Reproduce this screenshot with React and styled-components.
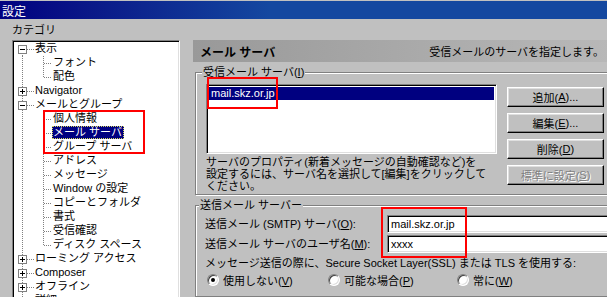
import React from "react";
import styled, { createGlobalStyle } from "styled-components";

const GlobalStyle = createGlobalStyle`
  html, body {
    margin: 0;
    padding: 0;
    background: #c0c0c0;
  }
  body {
    font-family: "Liberation Sans", "Noto Sans CJK JP", sans-serif;
    font-size: 11px;
    color: #000;
  }
`;

const Window = styled.div`
  position: relative;
  width: 607px;
  height: 297px;
  overflow: hidden;
  display: flex;
  flex-direction: column;
  background: #c0c0c0;
`;

const TitleBar = styled.div`
  margin-top: 1px;
  height: 18px;
  flex-shrink: 0;
  display: flex;
  align-items: center;
  padding-left: 2px;
  color: #fff;
  font-size: 12px;
  background: linear-gradient(to right, #000080 0px, #0a1888 90px, #1448a0 270px, #1448a0 100%);
`;

const Body = styled.div`
  display: flex;
  padding-left: 12px;
  flex: 1;
  min-height: 0;
`;

const LeftColumn = styled.div`
  width: 168px;
  flex-shrink: 0;
  display: flex;
  flex-direction: column;
`;

const CategoryLabel = styled.div`
  margin-top: 4px;
  height: 14px;
  line-height: 14px;
`;

const TreeBox = styled.div`
  margin-top: 3px;
  height: 270px;
  flex-shrink: 0;
  padding: 1px;
  background: #fff;
  border: 1px solid;
  border-color: #808080 #fff #fff #808080;
  box-shadow: inset 1px 1px 0 #000, inset -1px -1px 0 #dfdfdf;
`;

const TreeRow = styled.div`
  display: flex;
  height: 14px;
  align-items: flex-start;
  white-space: nowrap;
`;

const TreeLabel = styled.span`
  height: 13px;
  line-height: 13px;
  padding: 0 2px 0 1px;
  background: ${(p) => (p.$selected ? "#000080" : "transparent")};
  color: ${(p) => (p.$selected ? "#fff" : "#000")};
  outline: ${(p) => (p.$selected ? "1px dotted #d8d860" : "none")};
  outline-offset: -1px;
`;

const RightColumn = styled.div`
  margin-left: 13px;
  margin-top: 21px;
  width: 430px;
  flex-shrink: 0;
  display: flex;
  flex-direction: column;
`;

const PanelHeader = styled.div`
  height: 22px;
  display: flex;
  align-items: center;
  justify-content: space-between;
  padding: 0 19px 0 7px;
  background: linear-gradient(to right, #999999 0%, #a9a9a9 50%, #b9b9b9 100%);
`;

const HeaderTitle = styled.span`
  font-size: 12px;
  font-weight: bold;
`;

const HeaderHint = styled.span`
  font-size: 11px;
`;

const GroupBox = styled.div`
  margin-top: 10px;
  margin-left: 2px;
  display: flex;
  flex-direction: column;
  border: 1px solid #808080;
  box-shadow: inset 1px 1px 0 #fff, 1px 1px 0 #fff;
  padding-bottom: ${(p) => p.$padBottom}px;
`;

const GroupLabel = styled.div`
  align-self: flex-start;
  margin: -7px 0 0 ${(p) => p.$indent}px;
  padding: 0 1px;
  height: 13px;
  line-height: 13px;
  background: #c0c0c0;
`;

const IncomingRow = styled.div`
  display: flex;
  margin-top: 5px;
  padding-left: 10px;
`;

const ListStack = styled.div`
  display: flex;
  flex-direction: column;
`;

const ServerList = styled.div`
  width: 291px;
  height: 70px;
  box-sizing: border-box;
  padding: 2px;
  background: #fff;
  border: 1px solid;
  border-color: #808080 #fff #fff #808080;
  box-shadow: inset 1px 1px 0 #000, inset -1px -1px 0 #dfdfdf;
`;

const ServerItem = styled.div`
  height: 13px;
  line-height: 13px;
  padding-left: 2px;
  background: #000080;
  color: #fff;
`;

const HelpText = styled.div`
  margin-top: 2px;
  line-height: 12px;
  white-space: nowrap;
`;

const ButtonStack = styled.div`
  margin-left: 10px;
  margin-top: 3px;
  display: flex;
  flex-direction: column;
  gap: 6px;
`;

const Button = styled.div`
  width: 97px;
  height: 20px;
  box-sizing: border-box;
  display: flex;
  align-items: center;
  justify-content: center;
  background: #c0c0c0;
  border: 1px solid;
  border-color: #fff #000 #000 #fff;
  box-shadow: inset -1px -1px 0 #808080, inset 1px 1px 0 #dfdfdf;
  color: ${(p) => (p.$disabled ? "#808080" : "#000")};
  text-shadow: ${(p) => (p.$disabled ? "1px 1px 0 #fff" : "none")};
`;

const FormGrid = styled.div`
  margin-top: 3px;
  padding-left: 9px;
  display: grid;
  grid-template-columns: 182px 1fr;
  row-gap: 2px;
  align-items: center;
`;

const FieldLabel = styled.div`
  line-height: 18px;
  white-space: nowrap;
`;

const TextField = styled.div`
  height: 18px;
  box-sizing: border-box;
  padding-left: 3px;
  line-height: 16px;
  background: #fff;
  border: 1px solid;
  border-color: #808080 #fff #fff #808080;
  box-shadow: inset 1px 1px 0 #000, inset -1px -1px 0 #dfdfdf;
`;

const SslNote = styled.div`
  margin-top: 3px;
  padding-left: 9px;
  line-height: 14px;
  white-space: nowrap;
`;

const RadioRow = styled.div`
  margin-top: 3px;
  padding-left: 11px;
  display: flex;
  height: 14px;
  align-items: center;
`;

const RadioOption = styled.div`
  width: ${(p) => p.$width}px;
  display: flex;
  align-items: center;
  gap: 4px;
  white-space: nowrap;
`;

const RadioCircle = styled.span`
  width: 12px;
  height: 12px;
  box-sizing: border-box;
  border-radius: 50%;
  border: 1px solid;
  border-color: #808080 #fff #fff #808080;
  box-shadow: inset 1px 1px 0 #404040, inset -1px -1px 0 #dfdfdf;
  background: #fff;
  display: flex;
  align-items: center;
  justify-content: center;
  flex-shrink: 0;
`;

const RadioDot = styled.span`
  width: 4px;
  height: 4px;
  border-radius: 50%;
  background: #000;
`;

const Marker = styled.div`
  position: absolute;
  left: ${(p) => p.$x}px;
  top: ${(p) => p.$y}px;
  width: ${(p) => p.$w}px;
  height: ${(p) => p.$h}px;
  box-sizing: border-box;
  border: 2px solid #ff0000;
  pointer-events: none;
`;

const treeRows = [
  { level: 0, label: "表示", toggle: "minus", first: true },
  { level: 1, label: "フォント" },
  { level: 1, label: "配色", last: true },
  { level: 0, label: "Navigator", toggle: "plus" },
  { level: 0, label: "メールとグループ", toggle: "minus" },
  { level: 1, label: "個人情報" },
  { level: 1, label: "メール サーバ", selected: true },
  { level: 1, label: "グループ サーバ" },
  { level: 1, label: "アドレス" },
  { level: 1, label: "メッセージ" },
  { level: 1, label: "Window の設定" },
  { level: 1, label: "コピーとフォルダ" },
  { level: 1, label: "書式" },
  { level: 1, label: "受信確認" },
  { level: 1, label: "ディスク スペース", last: true },
  { level: 0, label: "ローミング アクセス", toggle: "plus" },
  { level: 0, label: "Composer", toggle: "plus" },
  { level: 0, label: "オフライン", toggle: "plus" },
  { level: 0, label: "詳細", toggle: "plus" },
];

const dot = { stroke: "#808080", strokeWidth: 1, strokeDasharray: "1 1", shapeRendering: "crispEdges" };

function RootGutter({ toggle, first }) {
  return (
    <svg width="20" height="14" style={{ flexShrink: 0 }}>
      <line x1="8.5" y1={first ? 7 : 0} x2="8.5" y2="14" {...dot} />
      {toggle && (
        <>
          <line x1="13" y1="7.5" x2="20" y2="7.5" {...dot} />
          <rect x="4.5" y="3.5" width="8" height="8" fill="#fff" stroke="#808080" shapeRendering="crispEdges" />
          <line x1="6" y1="7.5" x2="11" y2="7.5" stroke="#000" shapeRendering="crispEdges" />
          {toggle === "plus" && <line x1="8.5" y1="5" x2="8.5" y2="10" stroke="#000" shapeRendering="crispEdges" />}
        </>
      )}
    </svg>
  );
}

function ChildGutter({ last }) {
  return (
    <svg width="18" height="14" style={{ flexShrink: 0 }}>
      <line x1="9.5" y1="0" x2="9.5" y2={last ? 8 : 14} {...dot} />
      <line x1="10" y1="7.5" x2="18" y2="7.5" {...dot} />
    </svg>
  );
}

function CategoryTree() {
  return (
    <TreeBox>
      {treeRows.map((row) => (
        <TreeRow key={row.label}>
          <RootGutter toggle={row.level === 0 ? row.toggle : null} first={row.first} />
          {row.level === 1 && <ChildGutter last={row.last} />}
          <TreeLabel $selected={row.selected}>{row.label}</TreeLabel>
        </TreeRow>
      ))}
    </TreeBox>
  );
}

function Radio({ checked, width, children }) {
  return (
    <RadioOption $width={width}>
      <RadioCircle>{checked && <RadioDot />}</RadioCircle>
      <span>{children}</span>
    </RadioOption>
  );
}

export default function App() {
  return (
    <>
      <GlobalStyle />
      <Window>
        <TitleBar>設定</TitleBar>
        <Body>
          <LeftColumn>
            <CategoryLabel>カテゴリ</CategoryLabel>
            <CategoryTree />
          </LeftColumn>
          <RightColumn>
            <PanelHeader>
              <HeaderTitle>メール サーバ</HeaderTitle>
              <HeaderHint>受信メールのサーバを指定します。</HeaderHint>
            </PanelHeader>

            <GroupBox $padBottom={2}>
              <GroupLabel $indent={6}>
                受信メール サーバ(<u>I</u>)
              </GroupLabel>
              <IncomingRow>
                <ListStack>
                  <ServerList>
                    <ServerItem>mail.skz.or.jp</ServerItem>
                  </ServerList>
                  <HelpText>
                    サーバのプロパティ(新着メッセージの自動確認など)を
                    <br />
                    設定するには、サーバ名を選択して[編集]をクリックして
                    <br />
                    ください。
                  </HelpText>
                </ListStack>
                <ButtonStack>
                  <Button>追加(<u>A</u>)...</Button>
                  <Button>編集(<u>E</u>)...</Button>
                  <Button>削除(<u>D</u>)</Button>
                  <Button $disabled>標準に設定(<u>S</u>)</Button>
                </ButtonStack>
              </IncomingRow>
            </GroupBox>

            <GroupBox $padBottom={9}>
              <GroupLabel $indent={3}>送信メール サーバー</GroupLabel>
              <FormGrid>
                <FieldLabel>
                  送信メール (SMTP) サーバ(<u>O</u>):
                </FieldLabel>
                <TextField>mail.skz.or.jp</TextField>
                <FieldLabel>
                  送信メール サーバのユーザ名(<u>M</u>):
                </FieldLabel>
                <TextField>xxxx</TextField>
              </FormGrid>
              <SslNote>メッセージ送信の際に、Secure Socket Layer(SSL) または TLS を使用する:</SslNote>
              <RadioRow>
                <Radio checked width={121}>
                  使用しない(<u>V</u>)
                </Radio>
                <Radio width={129}>
                  可能な場合(<u>P</u>)
                </Radio>
                <Radio width={80}>
                  常に(<u>W</u>)
                </Radio>
              </RadioRow>
            </GroupBox>
          </RightColumn>
        </Body>

        <Marker $x={43} $y={110} $w={102} $h={44} />
        <Marker $x={207} $y={77} $w={71} $h={32} />
        <Marker $x={381} $y={207} $w={86} $h={51} />
      </Window>
    </>
  );
}
